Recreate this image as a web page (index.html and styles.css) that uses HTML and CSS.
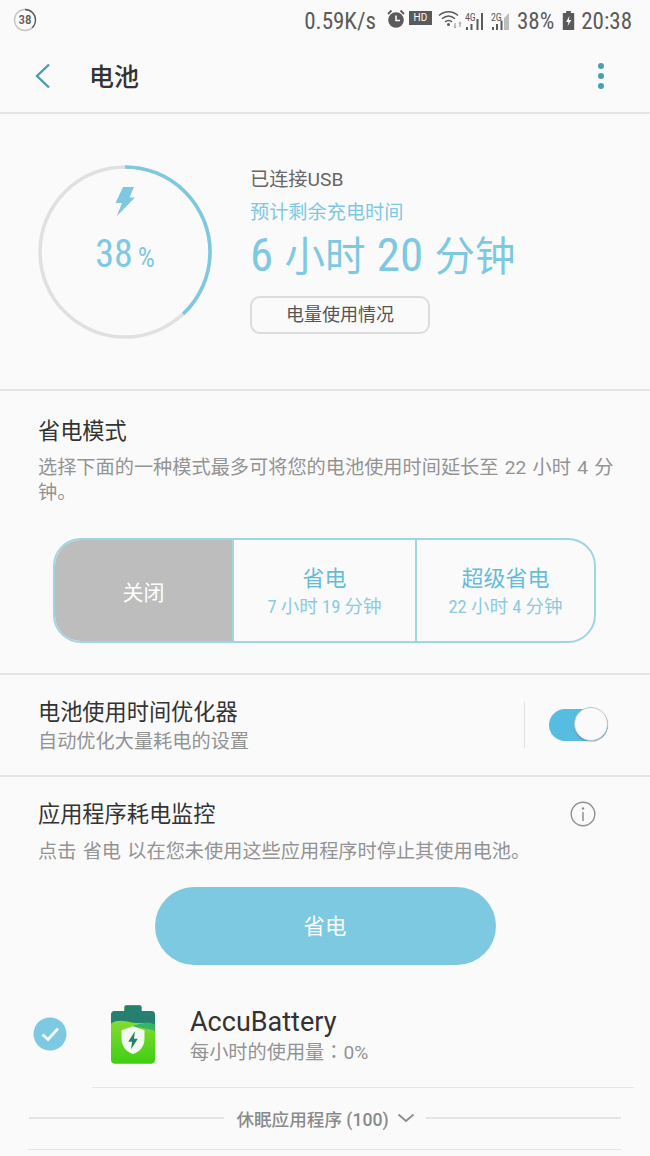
FILE: index.html
```html
<!DOCTYPE html>
<html lang="zh">
<head>
<meta charset="utf-8">
<title>电池</title>
<link rel="stylesheet" href="styles.css">
</head>
<body>
<div class="status-bar">
    <div class="badge">
        <svg width="24" height="24" viewBox="0 0 24 24"><circle cx="12" cy="12" r="10.500" fill="none" stroke="#c4c4c4" stroke-width="1.300"/><circle cx="12" cy="12" r="10.500" fill="none" stroke="#5a5a5a" stroke-width="1.300" pathLength="100" stroke-dasharray="38 62" transform="rotate(-90 12 12)"/></svg>
        <span>38</span>
    </div>
    <div class="status-right">
        <span class="speed">0.59K/s</span>
        <svg class="ic-alarm" width="18" height="20" viewBox="0 0 18 20"><circle cx="9" cy="11" r="7.800" fill="#5a5a5a"/><path d="M9 6.500V11.500H13" fill="none" stroke="#fafafa" stroke-width="1.600"/><path d="M1 5L4.500 1.500M17 5L13.500 1.500" stroke="#5a5a5a" stroke-width="1.800"/></svg>
        <span class="hd">HD</span>
        <svg class="ic-wifi" width="25" height="20" viewBox="0 0 25 20"><path d="M1 6.500C6.500 1.500 14.500 1.500 20 6.500M4 9.800C8 6.300 13 6.300 17 9.800M7 12.800C9.300 11 11.700 11 14 12.800" fill="none" stroke="#5a5a5a" stroke-width="1.500"/><circle cx="10.500" cy="15.500" r="1.500" fill="#5a5a5a"/><path d="M17 14v5M22 13v5" stroke="#aaa" stroke-width="1.300"/><path d="M15.300 17.500l1.700 2 1.700-2zM20.300 14.500l1.700-2 1.700 2z" fill="#aaa"/></svg>
        <div class="sim">
            <span>4G</span>
            <svg width="20" height="19" viewBox="0 0 20 19"><path d="M1 19v-3h2v3zM5.500 19v-6h2v6zM11.500 19V8h2v11zM16 19V2h2v17z" fill="#5a5a5a"/></svg>
        </div>
        <div class="sim sim-two">
            <span>2G</span>
            <svg width="19" height="19" viewBox="0 0 19 19"><path d="M1 19v-3h2v3zM5 19v-6h2v6zM9.500 19V9.500h2V19z" fill="#5a5a5a"/><path d="M13 19V7L18 2v17z" fill="#bdbdbd"/></svg>
        </div>
        <span class="level">38%</span>
        <svg class="ic-batt" width="13" height="19" viewBox="0 0 13 20"><path d="M4 0h5v2h3.500v18H.5V2H4z" fill="#5a5a5a"/><path d="M7.500 5L4 11.500h2.500L5.500 16 9.500 9.500H7z" fill="#fafafa"/></svg>
        <span class="clock">20:38</span>
    </div>
</div>

<div class="app-bar">
    <svg class="back" width="18" height="26" viewBox="0 0 18 26"><path d="M15 1.500L3 13l12 11.500" fill="none" stroke="#4b9cb5" stroke-width="2.400"/></svg>
    <div class="app-title">电池</div>
    <div class="more"><i></i><i></i><i></i></div>
</div>

<div class="section battery">
    <div class="ring">
        <svg width="176" height="176" viewBox="0 0 176 176">
            <circle cx="88" cy="88" r="85" fill="none" stroke="#e0e0e0" stroke-width="3.500"/>
            <circle cx="88" cy="88" r="85" fill="none" stroke="#7dc9e1" stroke-width="3.500" pathLength="100" stroke-dasharray="38 62" transform="rotate(-90 88 88)"/>
        </svg>
        <div class="ring-inner">
            <svg width="20" height="30" viewBox="0 0 20 30"><path d="M8 0h11l-4.500 10.500H20L1.500 29.500 7 16H.5z" fill="#7dc9e1"/></svg>
            <div class="ring-num">38<span>%</span></div>
        </div>
    </div>
    <div class="battery-info">
        <div class="usb">已连接USB</div>
        <div class="remain-label">预计剩余充电时间</div>
        <div class="remain"><span class="num">6</span> 小时 <span class="num">20</span> 分钟</div>
        <div class="usage-btn">电量使用情况</div>
    </div>
</div>

<div class="section saver">
    <div class="heading">省电模式</div>
    <div class="desc">选择下面的一种模式最多可将您的电池使用时间延长至 22 小时 4 分钟。</div>
    <div class="modes">
        <div class="mode mode-off">关闭</div>
        <div class="mode mode-mid">
            <div class="mode-name">省电</div>
            <div class="mode-time">7 小时 19 分钟</div>
        </div>
        <div class="mode">
            <div class="mode-name">超级省电</div>
            <div class="mode-time">22 小时 4 分钟</div>
        </div>
    </div>
</div>

<div class="section optimizer">
    <div class="opt-text">
        <div class="heading">电池使用时间优化器</div>
        <div class="opt-sub">自动优化大量耗电的设置</div>
    </div>
    <div class="opt-divider"></div>
    <div class="switch"><div class="knob"></div></div>
</div>

<div class="monitor">
    <div class="monitor-head">
        <div class="heading">应用程序耗电监控</div>
        <svg width="26" height="26" viewBox="0 0 26 26"><circle cx="13" cy="13" r="11.800" fill="none" stroke="#8f8f8f" stroke-width="1.400"/><circle cx="13" cy="7.500" r="1.200" fill="#8f8f8f"/><path d="M13 11v9" stroke="#8f8f8f" stroke-width="1.500"/></svg>
    </div>
    <div class="desc">点击 省电 以在您未使用这些应用程序时停止其使用电池。</div>
    <div class="save-btn">省电</div>
    <div class="app-row">
        <div class="check">
            <svg width="34" height="34" viewBox="0 0 34 34"><circle cx="17" cy="17" r="16.500" fill="#7dc9e1"/><path d="M9.500 17.500l5.500 5 10-11" fill="none" stroke="#f0f9fb" stroke-width="3"/></svg>
        </div>
        <svg class="app-icon" width="44" height="60" viewBox="0 0 46 62">
            <defs><linearGradient id="g" x1="0" y1="0" x2="0" y2="1"><stop offset="0" stop-color="#9be03c"/><stop offset="1" stop-color="#3fcf12"/></linearGradient></defs>
            <path d="M14 3a2 2 0 0 1 2-2h14a2 2 0 0 1 2 2v4h10a4 4 0 0 1 4 4v47a4 4 0 0 1-4 4H4a4 4 0 0 1-4-4V11a4 4 0 0 1 4-4h10z" fill="url(#g)"/>
            <path d="M46 19v9c-8-3-14-3-24-5 6-2 14-5 24-4z" fill="#35b56a"/>
            <path d="M14 3a2 2 0 0 1 2-2h14a2 2 0 0 1 2 2v4h10a4 4 0 0 1 4 4v10c-8-4-14 0-24-2C13 17 6 16 0 20V11a4 4 0 0 1 4-4h10z" fill="#26806f"/>
            <path d="M23 23l12 4v9c0 9-6 14-12 16-6-2-12-7-12-16v-9z" fill="#f3f8f1"/>
            <path d="M25 28l-7 11h4l-1 8 7-11h-4z" fill="#26806f"/>
        </svg>
        <div class="app-text">
            <div class="app-name">AccuBattery</div>
            <div class="app-usage">每小时的使用量<span class="colon" lang="zh-Hant">：</span>0%</div>
        </div>
    </div>
    <div class="row-line"></div>
    <div class="sleeping">
        <div class="sl-line"></div>
        <span>休眠应用程序 (100)</span>
        <svg width="18" height="10" viewBox="0 0 18 10"><path d="M1.500 1.500L9 8l7.500-6.500" fill="none" stroke="#8f8f8f" stroke-width="2"/></svg>
        <div class="sl-line"></div>
    </div>
    <div class="end-line"></div>
</div>
</body>
</html>
```

FILE: styles.css
```css
html, body {
    margin: 0;
    padding: 0;
}

body {
    width: 650px;
    height: 1156px;
    overflow: hidden;
    background: #fafafa;
    color: #3a3a3a;
    font-family: Roboto, "Noto Sans CJK SC", sans-serif;
}

.status-bar {
    height: 40px;
    display: flex;
    align-items: center;
    justify-content: space-between;
    padding: 0 18px 0 13px;
    color: #5a5a5a;
}

.badge {
    position: relative;
    width: 24px;
    height: 24px;
    font-size: 13px;
    font-weight: 500;
    font-stretch: 75%;
    line-height: 24px;
    text-align: center;
}

.badge svg {
    position: absolute;
    left: 0;
    top: 0;
}

.badge span {
    position: relative;
}

.status-right {
    display: flex;
    align-items: center;
}

.speed, .level, .clock {
    margin-top: 2px;
    font-size: 23px;
    font-stretch: 75%;
}

.speed {
    margin-right: 11px;
}

.ic-alarm, .ic-wifi {
    margin-bottom: 2px;
}

.hd {
    background: #5a5a5a;
    color: #fafafa;
    font-size: 10px;
    line-height: 14px;
    width: 23px;
    text-align: center;
    margin: 0 6px 4px 4px;
}

.sim {
    position: relative;
    width: 20px;
    height: 20px;
    margin-left: 2px;
}

.sim-two {
    margin-left: 6px;
}

.sim span {
    position: absolute;
    left: 0;
    top: 2px;
    font-size: 10px;
    font-stretch: 75%;
    line-height: 11px;
}

.sim svg {
    display: block;
    margin-top: 1px;
}

.level {
    margin-left: 6px;
    margin-right: 8px;
}

.clock {
    margin-left: 6px;
}

.app-bar {
    height: 72px;
    display: flex;
    align-items: center;
    padding: 0 46px 0 34px;
    border-bottom: 2px solid #e4e4e4;
}

.app-title {
    flex: 1;
    margin: -3px 0 0 37px;
    font-size: 25px;
    font-weight: 500;
    color: #333;
}

.more i {
    display: block;
    width: 6px;
    height: 6px;
    margin: 4px 0;
    border-radius: 50%;
    background: #4b9cb5;
}

.section {
    border-bottom: 2px solid #e4e4e4;
}

.battery {
    height: 275px;
    display: flex;
    align-items: center;
    padding-left: 37px;
}

.ring {
    position: relative;
    width: 176px;
    height: 176px;
    margin-right: 37px;
}

.ring-inner {
    position: absolute;
    inset: 0;
    display: flex;
    flex-direction: column;
    align-items: center;
    padding-top: 23px;
    color: #7dc9e1;
}

.ring-num {
    margin-top: 15px;
    font-size: 38px;
    font-stretch: 75%;
    line-height: 44px;
}

.ring-num span {
    margin-left: 5px;
    font-size: 27px;
}

.battery-info {
    margin-bottom: 3px;
}

.usb {
    font-size: 19.2px;
    line-height: 26px;
    color: #666;
}

.remain-label {
    margin-top: 7px;
    font-size: 19.2px;
    line-height: 26px;
    color: #7dc9e1;
}

.remain {
    margin-top: 2px;
    font-size: 40.5px;
    font-stretch: 75%;
    line-height: 54px;
    word-spacing: 2px;
    color: #7dc9e1;
}

.remain .num {
    font-size: 47px;
}

.usage-btn {
    width: 176px;
    height: 34px;
    margin-top: 12px;
    line-height: 34px;
    border: 2px solid #dcdcdc;
    border-radius: 10px;
    font-size: 18px;
    text-align: center;
    color: #555;
}

.saver {
    height: 284px;
    padding: 24px 30px 0 38px;
    box-sizing: border-box;
}

.heading {
    font-size: 22.2px;
    line-height: 32px;
    color: #333;
}

.desc {
    margin-top: 8px;
    font-size: 19.2px;
    line-height: 25px;
    word-spacing: 1.5px;
    color: #939393;
}

.modes {
    display: flex;
    width: 543px;
    height: 105px;
    box-sizing: border-box;
    margin: 33px 0 0 15px;
    border: 2px solid #a0d5e4;
    border-radius: 28px;
    overflow: hidden;
}

.mode {
    flex: 1;
    display: flex;
    flex-direction: column;
    justify-content: center;
    align-items: center;
    border-left: 2px solid #a0d5e4;
}

.mode-off {
    flex: none;
    width: 177px;
    border-left: 0;
    background: #bdbdbd;
    color: #fff;
    font-size: 21px;
}

.mode-mid {
    flex: none;
    width: 181px;
}

.mode-name {
    margin-top: 4px;
    font-size: 22px;
    line-height: 28px;
    color: #66bcd6;
}

.mode-time {
    margin-top: 1px;
    font-size: 18.5px;
    font-stretch: 75%;
    line-height: 26px;
    color: #8ccbde;
}

.optimizer {
    height: 100px;
    display: flex;
    align-items: center;
    padding: 0 42px 0 38px;
}

.opt-text {
    flex: 1;
}

.opt-sub {
    margin-top: 1px;
    font-size: 19.2px;
    line-height: 26px;
    color: #939393;
}

.opt-divider {
    width: 1px;
    height: 46px;
    margin-right: 24px;
    background: #e0e0e0;
}

.switch {
    position: relative;
    width: 59px;
    height: 32px;
    border-radius: 16px;
    background: #56bde0;
}

.knob {
    position: absolute;
    top: -2px;
    right: 0;
    width: 32px;
    height: 32px;
    border: 1px solid #c4c4c4;
    border-radius: 50%;
    background: #fafafa;
    box-shadow: 0 1px 1px rgba(0, 0, 0, .2);
}

.monitor {
    padding-top: 21px;
}

.monitor-head {
    display: flex;
    align-items: center;
    justify-content: space-between;
    padding: 0 54px 0 38px;
}

.monitor .desc {
    margin: 9px 38px 0;
}

.save-btn {
    width: 341px;
    height: 78px;
    margin: 23px auto 0;
    line-height: 80px;
    border-radius: 39px;
    background: #7dc9e1;
    color: #fff;
    font-size: 21.5px;
    text-align: center;
}

.app-row {
    display: flex;
    align-items: center;
    height: 122px;
    box-sizing: border-box;
    padding: 16px 0 0 33px;
}

.check {
    width: 34px;
    height: 34px;
    margin-right: 44px;
}

.app-icon {
    margin-right: 35px;
}

.app-text {
    padding-top: 3px;
}

.app-name {
    font-size: 27px;
    line-height: 34px;
    color: #333;
}

.app-usage {
    margin-top: -2px;
    font-size: 19.2px;
    line-height: 28px;
    color: #939393;
}

.colon {
    font-family: "Noto Sans CJK TC", sans-serif;
}

.row-line {
    height: 1px;
    margin: 0 16px 0 92px;
    background: #e4e4e4;
}

.sleeping {
    display: flex;
    align-items: center;
    height: 60px;
    padding: 0 29px;
    color: #8a8a8a;
    font-size: 17.6px;
    font-weight: 500;
}

.sleeping span {
    margin: 0 8px 0 12px;
}

.sl-line {
    flex: 1;
    height: 2px;
    background: #e4e4e4;
}

.sleeping svg {
    margin-right: 11px;
}

.end-line {
    height: 1px;
    margin: 1px 29px 0 28px;
    background: #e4e4e4;
}
```
